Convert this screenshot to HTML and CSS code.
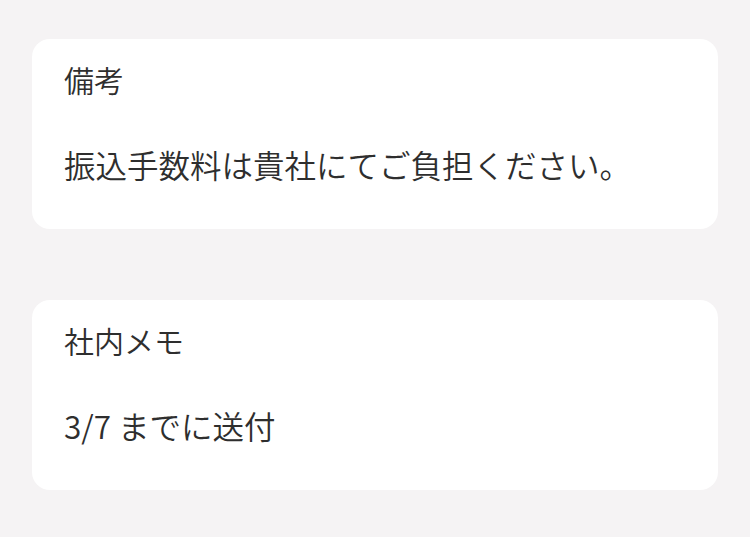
FILE: index.html
```html
<!DOCTYPE html>
<html lang="ja">
<head>
<meta charset="utf-8">
<title>備考</title>
<link rel="stylesheet" href="styles.css">
</head>
<body>
<main class="page">
  <section class="card">
    <h2 class="card-title">備考</h2>
    <p class="card-body">振込手数料は貴社にてご負担ください。</p>
  </section>
  <section class="card">
    <h2 class="card-title">社内メモ</h2>
    <p class="card-body">3/7 までに送付</p>
  </section>
</main>
</body>
</html>
```

FILE: styles.css
```css
html, body {
  margin: 0;
  padding: 0;
  background: #f5f3f4;
}
body {
  font-family: "Noto Sans CJK JP", "Noto Sans", sans-serif;
  color: #2e2e2e;
}
.page {
  display: flex;
  flex-direction: column;
  gap: 71px;
  padding: 39px 32px 0;
}
.card {
  background: #ffffff;
  border-radius: 18px;
  height: 190px;
  box-sizing: border-box;
  padding: 18px 32px 0;
  display: flex;
  flex-direction: column;
}
.card-title {
  margin: 0;
  font-size: 30px;
  font-weight: 350;
  line-height: 44px;
}
.card-body {
  margin: 41px 0 0;
  font-size: 31.5px;
  font-weight: 350;
  line-height: 44px;
}
```
